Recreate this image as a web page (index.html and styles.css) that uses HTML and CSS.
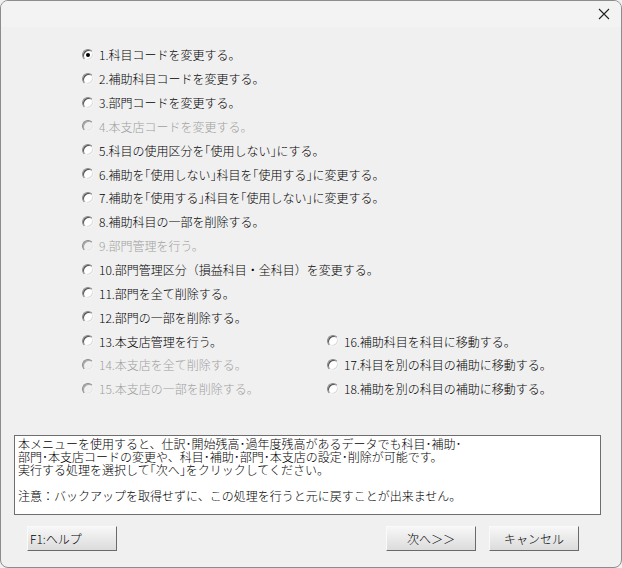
FILE: index.html
```html
<!DOCTYPE html>
<html lang="ja">
<head>
    <meta charset="UTF-8">
    <title>科目・補助・部門の変更</title>
    <link rel="stylesheet" href="styles.css">
</head>
<body>
    <div class="window">
        <div class="titlebar">
            <svg class="close" width="12" height="12" viewBox="0 0 12 12">
                <path d="M1 1 L11 11 M11 1 L1 11" stroke="#222" stroke-width="1.1" fill="none"/>
            </svg>
        </div>

        <div class="options">
            <div class="option"><span class="radio checked"></span>1.科目コードを変更する。</div>
            <div class="option"><span class="radio"></span>2.補助科目コードを変更する。</div>
            <div class="option"><span class="radio"></span>3.部門コードを変更する。</div>
            <div class="option disabled"><span class="radio"></span>4.本支店コードを変更する。</div>
            <div class="option"><span class="radio"></span>5.科目の使用区分を｢使用しない｣にする。</div>
            <div class="option"><span class="radio"></span>6.補助を｢使用しない｣科目を｢使用する｣に変更する。</div>
            <div class="option"><span class="radio"></span>7.補助を｢使用する｣科目を｢使用しない｣に変更する。</div>
            <div class="option"><span class="radio"></span>8.補助科目の一部を削除する。</div>
            <div class="option disabled"><span class="radio"></span>9.部門管理を行う。</div>
            <div class="option"><span class="radio"></span>10.部門管理区分（損益科目・全科目）を変更する。</div>
            <div class="option"><span class="radio"></span>11.部門を全て削除する。</div>
            <div class="option"><span class="radio"></span>12.部門の一部を削除する。</div>
            <div class="columns">
                <div class="option"><span class="radio"></span>13.本支店管理を行う。</div>
                <div class="option"><span class="radio"></span>16.補助科目を科目に移動する。</div>
                <div class="option disabled"><span class="radio"></span>14.本支店を全て削除する。</div>
                <div class="option"><span class="radio"></span>17.科目を別の科目の補助に移動する。</div>
                <div class="option disabled"><span class="radio"></span>15.本支店の一部を削除する。</div>
                <div class="option"><span class="radio"></span>18.補助を別の科目の補助に移動する。</div>
            </div>
        </div>

        <div class="notice">本メニューを使用すると、仕訳･開始残高･過年度残高があるデータでも科目･補助･<br>部門･本支店コードの変更や、科目･補助･部門･本支店の設定･削除が可能です。<br>実行する処理を選択して｢次へ｣をクリックしてください。<br><br>注意：バックアップを取得せずに、この処理を行うと元に戻すことが出来ません。</div>

        <div class="buttons">
            <button class="btn help">F1:ヘルプ</button>
            <span class="spacer"></span>
            <button class="btn">次へ＞＞</button>
            <button class="btn">キャンセル</button>
        </div>
    </div>
</body>
</html>
```

FILE: styles.css
```css
* {
    box-sizing: border-box;
}

body {
    margin: 0;
    font-family: "Noto Sans CJK JP", "Liberation Sans", sans-serif;
    font-size: 12px;
    font-weight: 300;
    color: #000;
    background-color: #f0f0f0;
}

.window {
    width: 622px;
    height: 568px;
    border: 1px solid #8c8c8c;
    border-radius: 8px;
    background-color: #f0f0f0;
    overflow: hidden;
    display: flex;
    flex-direction: column;
}

.titlebar {
    height: 26px;
    background-color: #f3f3f3;
    display: flex;
    justify-content: flex-end;
    align-items: center;
    padding-right: 11px;
}

.options {
    margin-top: 16px;
    padding-left: 81px;
}

.option {
    height: 23.85px;
    display: flex;
    align-items: center;
    gap: 5px;
    white-space: nowrap;
}

.option.disabled {
    color: #a0a0a0;
}

.columns {
    display: grid;
    grid-template-columns: 245px 1fr;
}

.radio {
    width: 12px;
    height: 12px;
    border-radius: 50%;
    background-color: #fff;
    border: 1px solid;
    border-color: #8a8a8a #f4f4f4 #f4f4f4 #8a8a8a;
    box-shadow: inset 1px 1px 0 #505050, inset -1px -1px 0 #dcdcdc;
    display: flex;
    align-items: center;
    justify-content: center;
    flex-shrink: 0;
}

.disabled .radio {
    background-color: #f0f0f0;
    box-shadow: inset 1px 1px 0 #a8a8a8, inset -1px -1px 0 #e6e6e6;
}

.radio.checked::after {
    content: "";
    width: 4px;
    height: 4px;
    border-radius: 50%;
    background-color: #000;
}

.notice {
    margin: 34px 0 0 13px;
    width: 587px;
    height: 80px;
    background-color: #fff;
    border: 1px solid #6e6e6e;
    padding: 1px 3px;
    line-height: 13px;
    white-space: nowrap;
}

.buttons {
    display: flex;
    gap: 13px;
    margin-top: 11px;
    padding-left: 26px;
}

.spacer {
    flex: 1;
}

.btn {
    width: 90px;
    height: 25px;
    font-family: inherit;
    font-size: 12px;
    font-weight: 300;
    color: #000;
    background: linear-gradient(#f7f7f7, #dcdcdc);
    border: 1px solid;
    border-color: #fafafa #6a6a6a #6a6a6a #fafafa;
    padding: 0;
}

.btn:last-child {
    margin-right: 42px;
}

.btn.help {
    text-align: left;
    padding-left: 2px;
}
```
